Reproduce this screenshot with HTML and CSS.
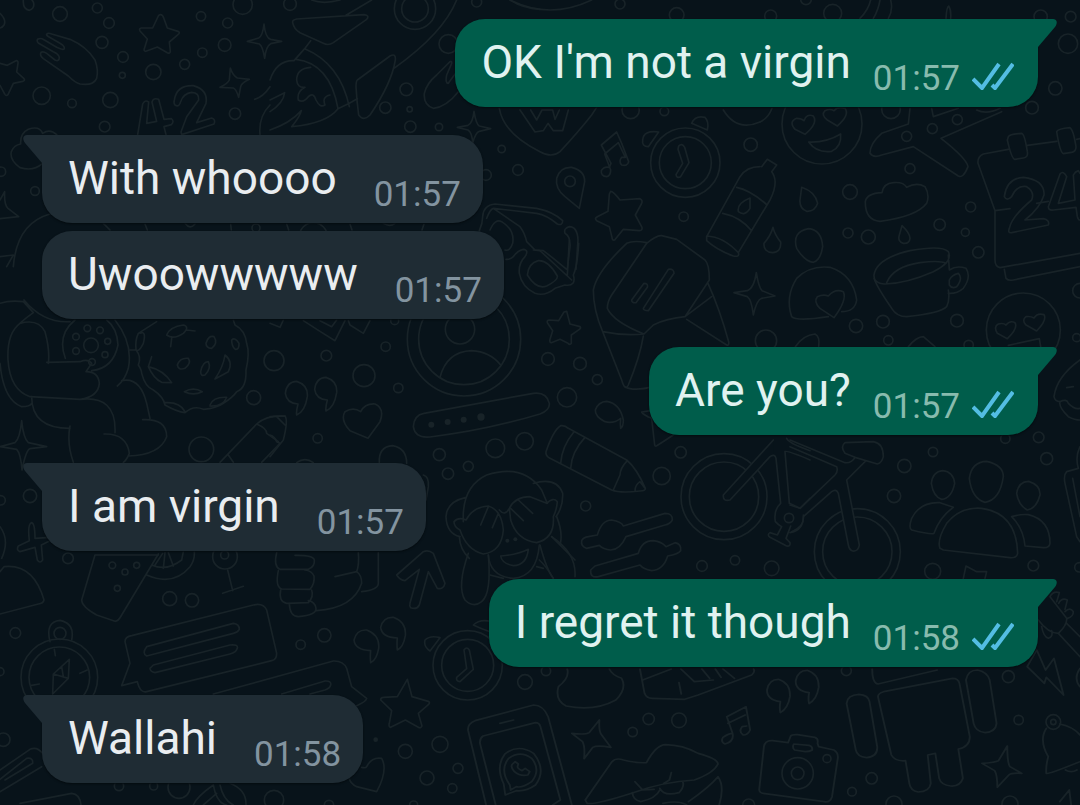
FILE: index.html
```html
<!DOCTYPE html>
<html lang="en">
<head>
<meta charset="utf-8">
<meta name="viewport" content="width=device-width, initial-scale=1">
<title>Chat</title>
<link rel="stylesheet" href="styles.css">
</head>
<body>
<main class="chat">
<svg class="wallpaper" viewBox="0 0 1080 805" preserveAspectRatio="xMinYMin slice" aria-hidden="true">
<g transform="scale(.33333)">
<circle cx="180" cy="42" r="22"/><circle cx="292" cy="24" r="15"/><circle cx="327" cy="69" r="16"/><circle cx="306" cy="127" r="18"/><circle cx="369" cy="171" r="16"/><circle cx="367" cy="226" r="9"/><circle cx="460" cy="216" r="23"/><circle cx="554" cy="193" r="15"/><circle cx="607" cy="158" r="14"/><circle cx="603" cy="49" r="14"/><circle cx="683" cy="69" r="15"/><circle cx="674" cy="135" r="19"/><circle cx="728" cy="14" r="29"/><circle cx="125" cy="287" r="26"/><circle cx="216" cy="310" r="13"/><circle cx="331" cy="300" r="23"/><circle cx="314" cy="380" r="16"/><circle cx="705" cy="341" r="17"/><circle cx="105" cy="573" r="13"/><circle cx="3" cy="515" r="14"/><circle cx="768" cy="684" r="12"/>
<path d="M70 0Q68 28 88 31Q106 24 100 6L96 0M0 40Q20 60 12 75Q8 82 0 84"/>
<path d="M482 44Q488 44 492 56L502 84L534 94Q542 98 534 104L508 126L511 154Q510 162 502 158L472 141L438 154Q430 154 433 146L442 117L420 93Q416 85 424 84L458 84L475 48Q478 43 482 44Z"/>
<path d="M0 190L22 196L48 182Q55 181 54 190L50 216L72 236Q76 242 68 244L40 250L24 284Q18 290 14 282L0 256"/>
<path d="M140 103Q144 97 155 102L210 118Q260 140 285 180Q296 210 290 235Q280 258 240 252Q225 248 205 228L130 176Q118 166 123 157Q130 153 140 160L165 180Q178 186 178 172Q176 162 160 155L116 130Q108 122 114 117Q122 113 132 119L170 142Q190 152 193 146Q194 138 180 130L146 110Q138 106 140 103Z"/>
<path d="M792 72Q796 114 812 118L845 124L812 131Q798 138 794 175Q788 138 778 132L742 124L776 114Q788 108 792 72Z"/>
<path d="M691 204Q698 226 712 234L748 238Q724 250 722 260L716 292Q708 266 700 264L660 262Q684 250 688 240Z"/>
<path d="M413 404L428 312Q434 298 446 306L440 370L470 364L456 306Q460 292 476 298L492 358L514 356Q524 364 514 374L492 380L498 404M523 300Q530 255 580 257Q625 270 618 310L590 368L635 354Q648 358 642 372L545 404L543 396L560 350L596 300Q598 278 575 277Q550 280 542 305Q538 322 526 316Q520 310 523 300Z"/>
<path d="M126 492Q100 515 60 503Q28 480 34 455Q42 435 62 432Q60 400 85 388Q118 376 128 400Q150 385 170 404M0 600L14 575Q12 615 24 625L56 650L0 656M40 800Q50 670 150 642M0 770L40 765L20 800M310 670L330 690M435 672L442 690M555 670Q570 690 585 672M692 672L694 690M764 298Q790 290 810 260M780 404Q775 350 810 315"/>
</g>
<g transform="translate(270 0) scale(.33333)">
<circle cx="60" cy="12" r="19"/><circle cx="435" cy="26" r="62"/><circle cx="435" cy="26" r="40"/><circle cx="620" cy="6" r="15"/><circle cx="535" cy="132" r="28"/><circle cx="409" cy="268" r="19"/><circle cx="346" cy="323" r="17"/><circle cx="419" cy="328" r="8"/><circle cx="421" cy="380" r="17"/><circle cx="507" cy="381" r="11"/><circle cx="695" cy="447" r="11"/><circle cx="744" cy="510" r="16"/><circle cx="648" cy="525" r="16"/><circle cx="130" cy="710" r="42"/>
<path d="M68 68Q66 60 80 57L282 44Q300 46 290 58L190 128Q175 138 160 130L90 98Q72 88 68 68ZM305 0L228 46M125 0Q160 14 210 0M122 122L104 146L72 182Q20 180 0 240M104 146Q210 190 238 320M78 178Q180 190 204 326L238 310L262 296M204 326Q170 370 65 380Q90 350 94 332Q60 370 0 390M0 300L44 278Q40 310 0 335M122 202Q80 205 80 240Q82 265 105 262Q80 275 85 300Q100 310 115 290Q130 275 138 300Q150 325 165 315Q155 290 180 285"/>
<path d="M262 240L360 168Q378 158 376 180Q365 250 300 345Q280 365 266 345Q260 300 258 260Q258 244 262 240ZM372 205Q520 100 560 0M565 275Q530 320 490 325Q460 315 463 280Q470 250 500 225L540 185Q546 182 545 190L530 225Q525 250 535 250Q545 235 565 210M720 0Q760 25 810 28"/>
<path d="M612 334Q618 372 628 378L662 386L628 394Q616 398 608 430Q606 396 594 390L562 382L594 376Q608 370 612 334ZM50 672L56 690M240 672L246 690M462 672L456 690M340 670Q360 682 375 670"/>
</g>
<g transform="translate(440 0) scale(.33333)">
<circle cx="540" cy="12" r="15"/><circle cx="710" cy="45" r="22"/><circle cx="572" cy="330" r="26"/><circle cx="673" cy="334" r="13"/><circle cx="932" cy="434" r="20"/><circle cx="731" cy="650" r="14"/><circle cx="736" cy="488" r="104"/><circle cx="736" cy="488" r="78"/><circle cx="390" cy="544" r="16"/>
<path d="M210 0Q330 60 455 0M178 325Q190 400 300 455Q335 475 360 455Q420 390 455 345L470 322M240 330L285 396L310 392L324 370L340 392L368 392L385 330M272 330L290 360L306 330L338 330L345 358L358 330M850 330Q890 396 960 366"/>
<path d="M118 692Q128 670 128 650Q130 615 165 612L290 625Q340 635 368 662Q368 678 352 672Q320 645 290 640L160 625Q150 628 140 655M160 625L240 680Q255 700 260 725L285 750L310 752L340 775L380 808M150 690Q165 655 185 665Q225 690 218 730Q210 755 195 750M382 805L390 740Q392 710 375 700Q370 685 388 680Q412 680 414 720L408 808"/>
<path d="M500 530Q482 528 484 512Q492 498 508 502L513 490L484 435L530 396L545 430L566 485Q562 500 545 495Q535 485 545 472L556 472L535 428L494 462L512 510Q512 528 500 530Z"/>
<path d="M418 625L375 590Q345 565 350 535Q360 500 395 502Q435 512 434 545ZM512 574Q520 574 540 600L600 596Q610 602 604 612L586 645L606 682Q608 692 598 692L550 688L524 720Q516 722 516 712L508 680L470 662Q462 655 472 650L504 634L508 582Z"/>
<path d="M608 420Q610 390 656 396L625 440Q605 440 608 420ZM755 370Q765 345 795 352Q808 365 802 390ZM716 438Q726 428 734 442L747 488L722 530Q710 536 708 524L728 490L714 448Z"/>
<path d="M800 710L900 530Q920 500 960 500M890 562Q930 570 978 612M848 640Q900 650 935 692M800 708Q850 710 895 758Q900 772 880 768Q830 750 800 722ZM895 758L990 600Q1018 545 995 515L1010 495L982 478L965 500M930 594Q890 610 895 635Q915 650 930 625Z"/>
</g>
<g transform="translate(750 0) scale(.33333)">
<circle cx="168" cy="-2" r="16"/><circle cx="62" cy="48" r="18"/><circle cx="248" cy="40" r="27"/><circle cx="872" cy="50" r="20"/><circle cx="962" cy="50" r="16"/><circle cx="954" cy="131" r="29"/><circle cx="916" cy="265" r="20"/><circle cx="846" cy="323" r="19"/><circle cx="300" cy="576" r="22"/><circle cx="355" cy="711" r="21"/><circle cx="294" cy="699" r="15"/><circle cx="569" cy="674" r="17"/><circle cx="662" cy="621" r="15"/><circle cx="646" cy="697" r="12"/><circle cx="480" cy="506" r="15"/><circle cx="470" cy="409" r="15"/><circle cx="547" cy="386" r="15"/><circle cx="622" cy="359" r="15"/><circle cx="685" cy="757" r="17"/><circle cx="216" cy="372" r="120"/><circle cx="423" cy="328" r="28"/>
<path d="M165 403L135 388Q115 365 140 355Q155 355 162 362Q170 340 190 348Q205 370 165 403ZM262 378L232 360Q212 345 225 332Q240 325 252 332Q262 318 285 325Q300 345 262 378ZM176 426Q230 428 272 402Q275 440 245 454Q200 460 176 426Z"/>
<path d="M330 55Q355 30 362 0M370 55Q385 30 390 0M415 55Q430 30 422 0M588 55Q590 20 596 18Q604 30 602 55M30 366Q55 355 66 325"/>
<path d="M480 325L475 372L395 400Q360 430 360 460Q370 475 395 465L490 440L625 528Q640 536 654 500Q650 475 573 415L755 335M545 325L550 350L625 325M680 330Q710 345 750 325"/>
<path d="M775 448L700 462Q682 470 684 490L735 632V780Q735 800 750 803L990 760M832 436L920 424M980 418L990 416M735 632L780 626M860 610L895 604M775 410Q780 402 815 400Q824 402 832 455Q835 472 820 474L795 478Q785 478 772 420ZM920 395Q924 386 960 383Q970 388 978 440Q978 455 965 457L940 461Q930 458 920 395Z"/>
<path d="M763 590Q770 535 820 532Q885 540 882 585Q870 625 825 660L880 656Q900 660 895 675L785 698Q772 700 778 685Q785 650 845 600Q855 575 830 560Q800 555 785 590Q770 605 763 590ZM990 520L985 512Q975 515 970 525L975 600L925 610L950 530Q940 510 930 522L895 620Q895 632 910 630L978 622L982 650Q985 660 990 660"/>
<path d="M155 562Q195 575 203 610Q195 635 170 634Q148 625 150 600ZM69 682Q74 704 92 726Q94 757 68 758Q40 756 42 730Q62 708 69 682ZM456 677Q480 700 480 715Q478 732 460 730Q442 725 448 705ZM176 686Q215 690 218 740Q212 780 190 787Q165 785 140 745Q125 695 176 686ZM346 605Q350 580 396 578Q400 550 430 548Q460 545 470 562Q500 545 525 560Q540 585 530 610Q500 650 390 664Q345 660 346 605Z"/>
</g>
<g transform="translate(480 200) scale(.33333)">
<circle cx="858" cy="422" r="32"/><circle cx="204" cy="477" r="19"/><circle cx="300" cy="491" r="19"/><circle cx="352" cy="539" r="15"/><circle cx="261" cy="592" r="29"/><circle cx="46" cy="745" r="28"/><circle cx="134" cy="724" r="26"/>
<path d="M78 178Q90 180 100 170Q112 152 130 148Q148 150 135 170Q115 190 118 220Q125 260 165 280Q195 290 225 265L255 255Q290 260 280 225Q292 200 296 130M142 225Q145 190 175 182Q205 180 232 228Q235 240 200 258Q170 270 142 225ZM160 150L180 152L275 240M268 120L262 225"/>
<path d="M500 128Q460 120 440 130Q350 215 340 270Q340 330 368 395L425 540Q435 575 445 555Q480 470 490 408M368 395Q430 408 492 402M500 130Q530 105 545 107L590 118L675 180Q688 192 688 240L615 350Q560 355 520 375L492 402Q400 365 382 325Q382 305 395 285ZM615 350L695 290M620 358L740 435Q748 438 746 425Q720 330 684 250M435 560Q460 575 520 560M455 300L492 250Q505 250 502 262L468 308Q455 310 455 300ZM490 325L565 208Q582 205 582 220L505 332Q490 332 490 325Z"/>
<path d="M829 218Q836 262 846 272L885 288L845 295Q830 300 820 345Q815 300 802 290L762 278L802 272Q822 265 829 218ZM260 334L270 372L300 380Q304 384 298 388L274 405L274 430Q270 436 264 430L240 418L214 428Q208 428 210 418L218 392L202 368Q200 360 208 360L236 362L252 336Z"/>
<path d="M422 685Q420 672 422 655Q400 672 375 665Q345 650 346 630Q355 605 380 604Q420 610 430 660Q430 680 422 685ZM512 632L485 636Q490 645 515 655L524 735Q526 742 534 735L580 705"/>
</g>
<g transform="translate(760 220) scale(.33333)">
<circle cx="288" cy="318" r="20"/><circle cx="369" cy="305" r="19"/><circle cx="385" cy="361" r="14"/><circle cx="591" cy="302" r="19"/><circle cx="626" cy="375" r="14"/><circle cx="836" cy="652" r="16"/><circle cx="736" cy="656" r="14"/><circle cx="519" cy="696" r="14"/><circle cx="860" cy="716" r="18"/><circle cx="433" cy="738" r="20"/><circle cx="960" cy="212" r="22"/><circle cx="950" cy="353" r="12"/><circle cx="790" cy="330" r="111"/>
<path d="M106 380Q130 345 165 342Q180 348 176 380M445 380Q470 350 490 350L525 380M245 275Q285 275 290 240Q280 165 210 142Q150 135 110 175Q75 230 95 290Q110 305 205 290M222 293L180 265Q160 245 172 230Q190 222 205 228Q225 205 250 215Q262 240 222 293Z"/>
<path d="M342 165Q350 115 450 92Q545 75 565 95Q580 125 520 155Q440 190 375 192Q340 190 342 165ZM380 188Q400 140 480 128Q540 120 558 130M342 175Q350 200 395 265Q410 290 440 290Q540 280 560 260Q570 240 565 210M565 105L568 150Q590 135 618 145Q635 170 610 205Q590 222 565 220M568 180Q575 165 595 160Q610 175 590 200Q575 207 568 195Z"/>
<path d="M742 356L712 340Q700 320 715 312Q730 308 738 315Q750 300 765 308Q775 325 742 356ZM830 333L797 314Q785 300 798 290Q812 288 822 294Q832 278 852 284Q862 300 830 333ZM745 376L838 356L842 380M733 148L738 175Q745 183 760 180L960 140M960 420Q890 470 882 530Q885 545 900 545Q895 560 925 590Q945 600 960 600M920 503L940 500M900 545Q920 535 925 550Q945 570 960 565"/>
</g>
<g transform="translate(0 300) scale(.33333)">
<circle cx="273" cy="136" r="22"/><circle cx="262" cy="85" r="10"/><circle cx="300" cy="91" r="10"/><circle cx="228" cy="110" r="10"/><circle cx="323" cy="124" r="9"/><circle cx="228" cy="153" r="10"/><circle cx="315" cy="164" r="9"/><circle cx="276" cy="186" r="10"/><circle cx="822" cy="182" r="30"/><circle cx="761" cy="293" r="21"/><circle cx="604" cy="448" r="37"/><circle cx="90" cy="588" r="20"/><circle cx="2" cy="601" r="14"/>
<path d="M196 175Q170 105 225 60M275 212Q340 205 354 135Q352 85 320 60M0 10Q30 0 70 5L100 38Q70 60 60 70Q20 100 24 180Q30 270 90 290L240 298Q295 290 298 250Q295 215 258 215L275 190Q265 175 240 185L140 187M60 70Q115 55 135 95Q150 150 145 190M72 0Q130 70 210 65M345 60Q400 130 385 205Q375 240 352 258M365 242Q420 230 440 310L450 355M428 359Q500 355 500 410Q480 465 385 468M312 402Q380 400 388 460Q380 480 370 487M95 290Q95 385 210 385M210 378Q200 430 220 487M240 298Q350 285 345 398M0 190Q10 300 65 320Q90 320 95 310"/>
<path d="M65 362Q70 415 85 428L140 440L90 446Q78 450 66 510Q62 460 50 448L0 440L45 428Q60 415 65 362Z"/>
<path d="M470 65L415 100Q405 120 408 150L388 150M408 150Q425 170 415 195Q425 210 425 220Q435 260 460 270Q490 290 495 315Q530 335 555 338Q580 315 610 328Q650 325 670 310Q700 290 710 275Q740 265 738 210Q750 160 740 130Q735 90 705 75L700 60M420 100Q440 90 430 130Q415 160 407 148M500 105Q510 80 550 75Q570 80 550 100Q520 120 500 105ZM560 90L585 93M515 115L512 140M618 130Q625 105 642 110Q655 130 635 145Q618 145 618 130ZM695 120Q705 110 717 130Q718 150 706 148Q695 140 695 120ZM532 195Q540 172 565 175Q575 190 555 205Q535 212 532 195ZM602 215Q608 185 625 185Q635 205 615 225Q602 230 602 215ZM675 165Q700 185 685 215L645 237Q670 200 675 165ZM455 170L445 200Q460 235 485 247L515 248Q490 210 445 200M553 275Q580 260 607 275Q580 288 553 275ZM495 308Q540 305 555 335M630 315Q640 290 680 292Q670 320 630 318"/>
<path d="M660 487L770 372Q800 345 855 348M685 465L700 487M770 372Q800 385 800 400L835 425M785 487L840 430M95 668Q105 670 105 715L150 712M95 668Q82 672 88 722L55 738Q48 750 60 755L105 742L112 780Q120 792 128 780L124 735L150 722M0 680Q30 720 5 775"/>
</g>
<g transform="translate(270 300) scale(.33333)">
<circle cx="169" cy="167" r="16"/><circle cx="347" cy="140" r="14"/><circle cx="282" cy="227" r="33"/><circle cx="385" cy="264" r="14"/><circle cx="143" cy="415" r="14"/><circle cx="374" cy="62" r="12"/><circle cx="508" cy="464" r="18"/><circle cx="534" cy="521" r="17"/><circle cx="595" cy="499" r="15"/><circle cx="582" cy="118" r="170"/><circle cx="582" cy="118" r="136"/><circle cx="570" cy="88" r="44"/>
<circle class="dot" cx="484" cy="374" r="9"/><circle class="dot" cx="533" cy="366" r="9"/><circle class="dot" cx="581" cy="359" r="9"/><circle class="dot" cx="633" cy="351" r="11"/><circle class="dot" cx="712" cy="722" r="6"/><circle class="dot" cx="736" cy="718" r="6"/>
<path d="M510 232Q530 155 605 152Q660 155 692 195M80 345Q78 335 84 312Q50 310 46 280Q50 245 80 244Q115 255 112 290Q105 335 80 345ZM168 333Q166 323 172 300Q138 298 134 268Q138 233 168 232Q203 243 200 278Q193 323 168 333ZM294 415L240 392Q210 360 225 335Q250 320 272 335Q285 310 315 312Q345 325 330 365ZM462 340L790 280Q830 275 838 310Q840 330 810 342Q650 390 480 411Q435 415 430 380Q432 345 462 340Z"/>
<path d="M0 350L45 348Q55 360 40 420L0 470M20 350L45 375M0 405Q15 410 20 425L30 430M0 70L30 82L40 60M100 62Q150 95 195 122L225 62M150 62L185 80L200 60M235 62L240 75L280 100L300 62M328 488Q325 440 368 437Q410 445 410 490M460 525Q478 530 475 560L468 600M80 488Q105 470 130 488"/>
<path d="M580 665Q575 560 650 525Q760 490 815 570L832 610M790 550Q860 530 878 580Q880 620 858 650M588 592Q530 605 528 650Q530 700 570 710M588 660Q565 650 552 665Q552 680 570 690Q590 750 640 762Q695 755 700 690Q695 630 655 618Q610 620 588 660ZM655 620L632 675M685 640L667 683M718 625Q735 590 780 590L830 610Q850 590 862 605Q860 630 850 650Q855 715 800 728Q740 720 722 660ZM722 625L760 662M745 600L788 640M688 630Q705 650 718 625M692 768Q740 765 775 748Q770 795 730 797Q695 790 692 768ZM655 765Q660 830 730 835Q800 830 808 735M568 710Q570 750 598 775M845 710L915 780M808 780Q830 800 850 835M860 650Q880 700 870 735M660 825L700 835M800 800L820 805"/>
</g>
<g transform="translate(540 420) scale(.33333)">
<circle cx="422" cy="97" r="17"/><circle cx="365" cy="168" r="26"/><circle cx="137" cy="258" r="15"/><circle cx="486" cy="438" r="16"/><circle cx="585" cy="421" r="14"/><circle cx="695" cy="445" r="22"/><circle cx="552" cy="230" r="129"/><circle cx="552" cy="230" r="104"/><circle cx="747" cy="294" r="14"/>
<path d="M18 95Q40 30 62 17Q75 15 85 25L260 120Q290 145 316 205Q318 212 300 213Q240 220 215 210L30 115Q16 108 18 95ZM102 35Q65 80 62 130M135 52Q95 95 92 145M262 122Q240 145 240 165L220 210M315 205L300 185Q285 195 285 213"/>
<path d="M145 350L172 345Q185 300 215 300Q245 305 250 318L375 280Q398 280 397 300Q390 312 375 315L258 350Q240 390 212 390Q190 388 178 376L140 385Q122 380 125 362Q130 352 145 350ZM165 438L295 400Q305 362 340 362Q365 365 378 380L405 368Q425 372 422 392Q415 402 383 408Q370 450 335 452Q310 448 300 435L175 470Q150 475 152 450Z"/>
<path class="mask" d="M550 225L700 60L700 100L570 240Q548 245 550 225Z"/>
<path d="M700 60L550 225Q548 245 570 240L690 110Q705 100 708 115L722 250Q700 270 706 305Q715 315 725 320L712 345L690 338Q680 345 690 352L740 378Q752 380 750 368L738 355L752 318M735 95L748 250L780 265L810 235M735 95Q740 90 810 120M740 55Q745 70 810 92M790 285Q795 320 755 335M105 470Q110 400 35 350M0 375Q20 450 40 475"/>
</g>
<g transform="translate(790 420) scale(.33333)">
<circle cx="312" cy="228" r="20"/><circle cx="428" cy="454" r="24"/><circle cx="730" cy="437" r="16"/><circle cx="202" cy="395" r="129"/><circle cx="202" cy="395" r="104"/><circle cx="868" cy="442" r="14"/>
<path class="mask" d="M145 220L170 180L208 375Q205 395 188 393Q178 390 175 375Z"/>
<path d="M0 60L165 128Q185 130 195 112L165 100Q150 80 165 68L250 65Q280 70 280 110Q275 130 262 132L195 112M225 125L170 180L208 375Q205 395 188 393Q178 390 175 375L145 220Q138 205 125 215L40 290Q40 330 0 338M0 80L140 140Q145 155 135 165L30 265L0 255"/>
<path d="M458 152Q490 155 494 190Q485 235 455 238Q430 230 424 190Q428 155 458 152ZM590 124Q640 135 640 170Q630 240 585 247Q545 235 538 175Q545 125 590 124ZM716 184Q752 195 750 225Q740 265 712 270Q685 255 680 220Q685 185 716 184ZM365 330Q355 325 365 295Q390 245 450 248L490 262Q450 290 432 340Q425 345 365 330ZM450 385Q440 360 470 310Q510 260 575 265Q680 280 683 400Q680 415 660 413L460 390ZM665 290Q690 282 715 284Q780 300 780 370Q778 384 760 383L705 378Q700 325 665 290Z"/>
<path d="M520 475L528 438L560 455L590 455L585 475M870 80Q855 110 865 145L830 155Q820 165 825 190L860 350L870 365M848 175L870 290M780 530Q790 512 808 518L800 545M806 550Q815 532 832 540L825 568M825 575Q840 560 850 575Q850 590 832 595M780 530L830 595Q832 615 805 640Q775 640 745 600M830 610L870 650M805 640L870 710M755 620Q760 650 775 655Q790 650 785 632"/>
</g>
<g transform="translate(0 540) scale(.33333)">
<circle cx="204" cy="55" r="16"/><circle cx="337" cy="76" r="10"/><circle cx="410" cy="76" r="9"/><circle cx="375" cy="96" r="9"/><circle cx="352" cy="145" r="9"/><circle cx="509" cy="176" r="21"/><circle cx="576" cy="181" r="20"/><circle cx="46" cy="279" r="16"/><circle cx="180" cy="280" r="18"/><circle cx="0" cy="395" r="12"/><circle cx="10" cy="599" r="20"/><circle cx="902" cy="314" r="14"/><circle cx="973" cy="286" r="20"/><circle class="dot" cx="1127" cy="599" r="7"/><circle cx="1216" cy="634" r="21"/><circle cx="1320" cy="613" r="24"/><circle cx="1374" cy="685" r="15"/><circle cx="1281" cy="714" r="21"/><circle cx="1357" cy="745" r="14"/><circle cx="822" cy="780" r="29"/><circle cx="987" cy="795" r="14"/><circle cx="1241" cy="795" r="12"/><circle cx="537" cy="742" r="33"/><circle cx="357" cy="738" r="14"/><circle cx="461" cy="738" r="12"/><circle cx="675" cy="50" r="37"/><circle cx="674" cy="45" r="12"/><circle cx="178" cy="412" r="115"/><circle cx="178" cy="412" r="91"/><circle cx="1403" cy="376" r="104"/><circle cx="1403" cy="376" r="78"/>
<path d="M285 45H475M285 45L245 180Q245 200 290 225L345 244Q355 244 365 225L475 42M440 105Q520 140 570 80Q585 60 583 35M455 75Q500 95 545 60L550 35M490 85L495 38M520 78L505 38M465 75L488 40M683 90L698 152M668 160L730 139M0 95L12 80Q100 70 132 180Q130 190 115 192L0 222"/>
<path d="M830 38Q820 80 840 88L925 88Q945 80 943 60Q940 45 885 46M835 92Q825 140 845 147L930 148Q945 130 942 108Q935 92 915 90M842 150Q835 185 860 190L925 188Q942 170 935 150M868 192Q870 230 895 230Q950 225 948 205Q945 185 925 182M950 212Q1060 205 1085 130Q1085 105 1070 95L1005 110M1070 95Q1078 75 1075 38M1085 155Q1135 150 1135 130V38M1230 190L1258 88L1215 122Q1200 120 1190 105L1270 35Q1285 28 1300 40L1335 130Q1330 150 1312 145L1285 95L1258 195Q1250 210 1232 203Q1228 198 1230 190ZM1405 40Q1370 140 1395 180Q1420 205 1445 185Q1475 160 1465 45"/>
<path d="M375 305Q375 290 395 287L760 195Q790 188 800 210L830 340Q830 360 815 362L440 455Q420 460 412 425L365 437L390 370ZM440 320L700 250Q718 252 718 268Q712 278 700 280L440 348Q425 340 440 320ZM460 375L690 315Q715 312 712 325Q708 338 690 342L465 398Q450 395 450 385ZM640 462L1000 363Q1030 362 1040 385L1055 440L1100 475Q1098 485 1070 497M845 462L975 423Q995 422 992 435Q990 445 975 450L930 462"/>
<path d="M150 305Q135 245 180 241Q225 250 215 300M158 462L160 402L208 358L205 415ZM160 402L205 415M185 380L190 410M163 328L166 347M95 436L118 432M240 400L262 390M1112 368Q1110 350 1112 332Q1065 330 1062 300Q1070 268 1100 270Q1140 285 1136 325Q1130 360 1112 368ZM1192 330Q1190 312 1192 294Q1145 292 1142 262Q1150 230 1180 232Q1220 247 1216 287Q1210 322 1192 330ZM1392 330Q1400 318 1408 330L1420 388L1380 425Q1368 425 1370 412L1400 386ZM1290 333Q1270 320 1275 300Q1290 285 1320 293ZM1420 255Q1440 235 1475 245L1470 275Q1440 265 1420 255ZM1222 418L1236 470L1285 484Q1292 488 1285 494L1255 520L1266 558Q1262 566 1255 562L1216 540L1172 562Q1165 560 1168 550L1175 512L1142 480Q1142 472 1150 472L1192 470Z"/>
<path d="M1048 715Q1050 730 1070 740L1130 755Q1165 690 1145 655Q1115 650 1100 680Q1098 685 1085 682M0 690L90 628Q110 618 128 640M0 718L80 655Q100 652 98 670L15 720M0 755L125 680M60 790L215 760Q240 762 243 795M580 795Q590 770 640 735Q650 790 680 795M610 795L650 760M690 730Q740 750 738 795M660 735Q670 780 700 795"/>
</g>
<g transform="scale(.33333)">
<circle cx="1575" cy="2046" r="22"/><circle cx="1638" cy="2013" r="14"/><circle cx="1946" cy="2157" r="17"/><circle cx="1898" cy="2196" r="14"/><circle cx="2037" cy="2161" r="22"/><circle cx="2615" cy="2335" r="17"/><circle cx="2556" cy="2375" r="13"/><circle cx="2393" cy="2320" r="47"/><circle cx="2393" cy="2320" r="19"/><circle cx="2481" cy="2276" r="12"/><circle cx="2539" cy="2012" r="15"/><circle cx="3025" cy="2030" r="18"/><circle cx="3056" cy="2160" r="14"/><circle cx="3160" cy="2166" r="22"/><circle cx="3160" cy="2166" r="8"/><circle cx="2682" cy="2412" r="24"/><circle cx="3030" cy="2412" r="24"/><circle cx="2246" cy="2415" r="18"/>
</g>
<g transform="translate(480 600) scale(.38265 .33333)">
<path d="M228 207Q235 232 205 260Q195 300 225 318Q300 335 355 300Q385 265 370 235Q345 225 338 207M418 207L430 280Q435 295 450 295L535 298L570 285L710 225Q720 215 715 207M425 240L500 207M520 248L526 282M525 207L560 245L610 240M580 207L600 235M615 207L630 232M635 207L665 235M785 338Q782 325 785 305Q750 300 750 270Q755 238 780 238Q812 250 810 290Q805 325 785 338ZM860 311Q857 298 860 278Q825 273 825 243Q830 211 855 211Q887 223 885 263Q880 298 860 311Z"/>
<path d="M1025 207Q1025 250 1040 252L1195 210M1040 290Q1040 280 1055 275L1235 235Q1250 235 1253 250L1280 410Q1280 440 1250 447L1262 535Q1255 560 1230 558Q1205 555 1200 535L1190 460L1170 465L1178 550Q1175 575 1145 576Q1125 572 1122 550L1112 482Q1085 485 1075 465ZM958 310Q960 285 990 283Q1015 285 1018 305L1038 440Q1040 470 1010 473Q985 470 982 450ZM1270 240Q1275 210 1300 210Q1325 215 1332 240L1350 370Q1348 395 1320 398Q1295 395 1290 370Z"/>
<path d="M312 360Q310 395 318 405L342 442Q305 435 295 442L272 476Q275 440 268 425L240 400Q275 405 285 398ZM1378 438Q1378 490 1385 500L1416 520Q1388 518 1382 525L1352 562Q1352 525 1345 512L1312 490Q1345 488 1355 482ZM640 432Q628 425 635 412Q650 400 660 400L645 350L695 320L706 390Q700 405 688 405Q675 395 685 380L697 378M648 370L693 345M660 400Q665 425 640 432"/>
<path d="M240 615L178 350Q165 315 140 315L-13 362Q-34 372 -31 392L16 615M190 615L210 600L158 380Q155 368 145 368L8 408Q-1 415 0 430L41 615M52 370L88 360M66 585L62 552Q40 500 65 462Q100 430 140 460Q175 510 145 555Q120 575 95 572ZM78 555Q50 510 75 475Q105 450 135 475Q160 510 135 545Q110 565 95 560L80 570ZM85 492Q78 500 90 515Q105 530 125 525L130 515L118 505L110 512Q98 505 98 500L100 492L92 485Z"/>
<path d="M275 600L345 485Q355 472 375 480Q410 490 435 488Q460 435 485 434Q530 435 570 460Q620 475 622 492Q610 520 560 540Q480 545 400 578Q300 615 280 610ZM405 545L425 570L455 568M500 518L495 540L480 550M398 578Q400 600 420 605Q460 595 470 570M470 565Q480 590 520 578Q535 560 530 545M545 605Q600 560 622 530Q640 560 625 615M478 610Q520 600 540 615M742 440Q745 420 765 422L805 428L812 408Q815 403 830 404L875 412Q885 415 882 430L885 440L925 450Q937 458 935 475L920 590Q915 608 900 605L740 580Q728 578 730 565ZM820 432L860 436Q870 440 868 450Q862 455 850 455L822 450Q815 442 820 432Z"/>
<path d="M1480 385Q1460 420 1485 470Q1478 500 1480 520Q1482 525 1568 485M1515 372Q1550 380 1568 405M1530 510Q1545 520 1560 510M1515 605L1540 570L1545 615M1455 150L1430 200L1475 250L1480 232L1525 285L1500 175L1478 210ZM1568 205Q1550 235 1568 260"/>
</g>
</svg>

<ol class="messages">
<li class="message out first">
<svg class="tail" viewBox="0 0 20 28" aria-hidden="true"><path d="M0 0H15C19 0 20 4 17 8L0 28Z"/></svg>
<p class="text">OK I'm not a virgin</p>
<span class="meta"><time>01:57</time><svg class="ticks" viewBox="0 0 42 28" role="img" aria-label="Read"><path d="M1 17L10 26L27 2M20 23L23 26L41 2"/></svg></span>
</li>
<li class="message in first">
<svg class="tail" viewBox="0 0 20 28" aria-hidden="true"><path d="M20 0H5C1 0 0 4 3 8L20 28Z"/></svg>
<p class="text">With whoooo</p>
<span class="meta"><time>01:57</time></span>
</li>
<li class="message in">
<p class="text">Uwoowwwww</p>
<span class="meta"><time>01:57</time></span>
</li>
<li class="message out first">
<svg class="tail" viewBox="0 0 20 28" aria-hidden="true"><path d="M0 0H15C19 0 20 4 17 8L0 28Z"/></svg>
<p class="text">Are you?</p>
<span class="meta"><time>01:57</time><svg class="ticks" viewBox="0 0 42 28" role="img" aria-label="Read"><path d="M1 17L10 26L27 2M20 23L23 26L41 2"/></svg></span>
</li>
<li class="message in first">
<svg class="tail" viewBox="0 0 20 28" aria-hidden="true"><path d="M20 0H5C1 0 0 4 3 8L20 28Z"/></svg>
<p class="text">I am virgin</p>
<span class="meta"><time>01:57</time></span>
</li>
<li class="message out first">
<svg class="tail" viewBox="0 0 20 28" aria-hidden="true"><path d="M0 0H15C19 0 20 4 17 8L0 28Z"/></svg>
<p class="text">I regret it though</p>
<span class="meta"><time>01:58</time><svg class="ticks" viewBox="0 0 42 28" role="img" aria-label="Read"><path d="M1 17L10 26L27 2M20 23L23 26L41 2"/></svg></span>
</li>
<li class="message in first">
<svg class="tail" viewBox="0 0 20 28" aria-hidden="true"><path d="M20 0H5C1 0 0 4 3 8L20 28Z"/></svg>
<p class="text">Wallahi</p>
<span class="meta"><time>01:58</time></span>
</li>
</ol>
</main>
</body>
</html>
```
FILE: styles.css
```css
* {
  box-sizing: border-box;
}

body {
  margin: 0;
  background: #08131a;
  font-family: Roboto, "Liberation Sans", sans-serif;
}

.chat {
  position: relative;
  min-height: 100vh;
  overflow: hidden;
}

.wallpaper {
  position: absolute;
  inset: 0;
  width: 100%;
  height: 100%;
  fill: none;
  stroke: #182328;
  stroke-width: 5;
  stroke-linecap: round;
  stroke-linejoin: round;
}

.wallpaper .dot {
  fill: #182328;
  stroke: none;
}

.wallpaper .mask {
  fill: #08131a;
  stroke: none;
}

.messages {
  position: relative;
  display: flex;
  flex-direction: column;
  gap: 8px;
  margin: 0;
  padding: 19px 42px 22px;
  list-style: none;
}

.message {
  position: relative;
  display: flex;
  align-items: flex-end;
  max-width: 84%;
  padding: 17px 22px 8px 26px;
  border-radius: 30px;
  box-shadow: 0 1px 2px #040b0f;
}

.message.first:not(:first-child) {
  margin-top: 20px;
}

.in {
  align-self: flex-start;
  gap: 37px;
  background: #1f2c34;
  color: #e9edf0;
}

.out {
  align-self: flex-end;
  gap: 22px;
  padding-right: 24px;
  background: #005d4b;
  color: #e0f2f0;
}

.in.first {
  border-top-left-radius: 0;
}

.out.first {
  border-top-right-radius: 0;
}

.tail {
  position: absolute;
  top: 0;
  width: 20px;
  height: 28px;
}

.in .tail {
  right: 100%;
  fill: #1f2c34;
}

.out .tail {
  left: 100%;
  fill: #005d4b;
}

.text {
  margin: 0 0 11px;
  font-size: 46px;
  line-height: 52px;
}

.meta {
  display: flex;
  align-items: center;
  gap: 12px;
  color: #8394a0;
  font-size: 35px;
  line-height: 40px;
}

.out .meta {
  color: #88bbae;
}

.ticks {
  width: 42px;
  height: 28px;
  margin-bottom: 6px;
  fill: none;
  stroke: #53bde3;
  stroke-width: 4;
}
```
